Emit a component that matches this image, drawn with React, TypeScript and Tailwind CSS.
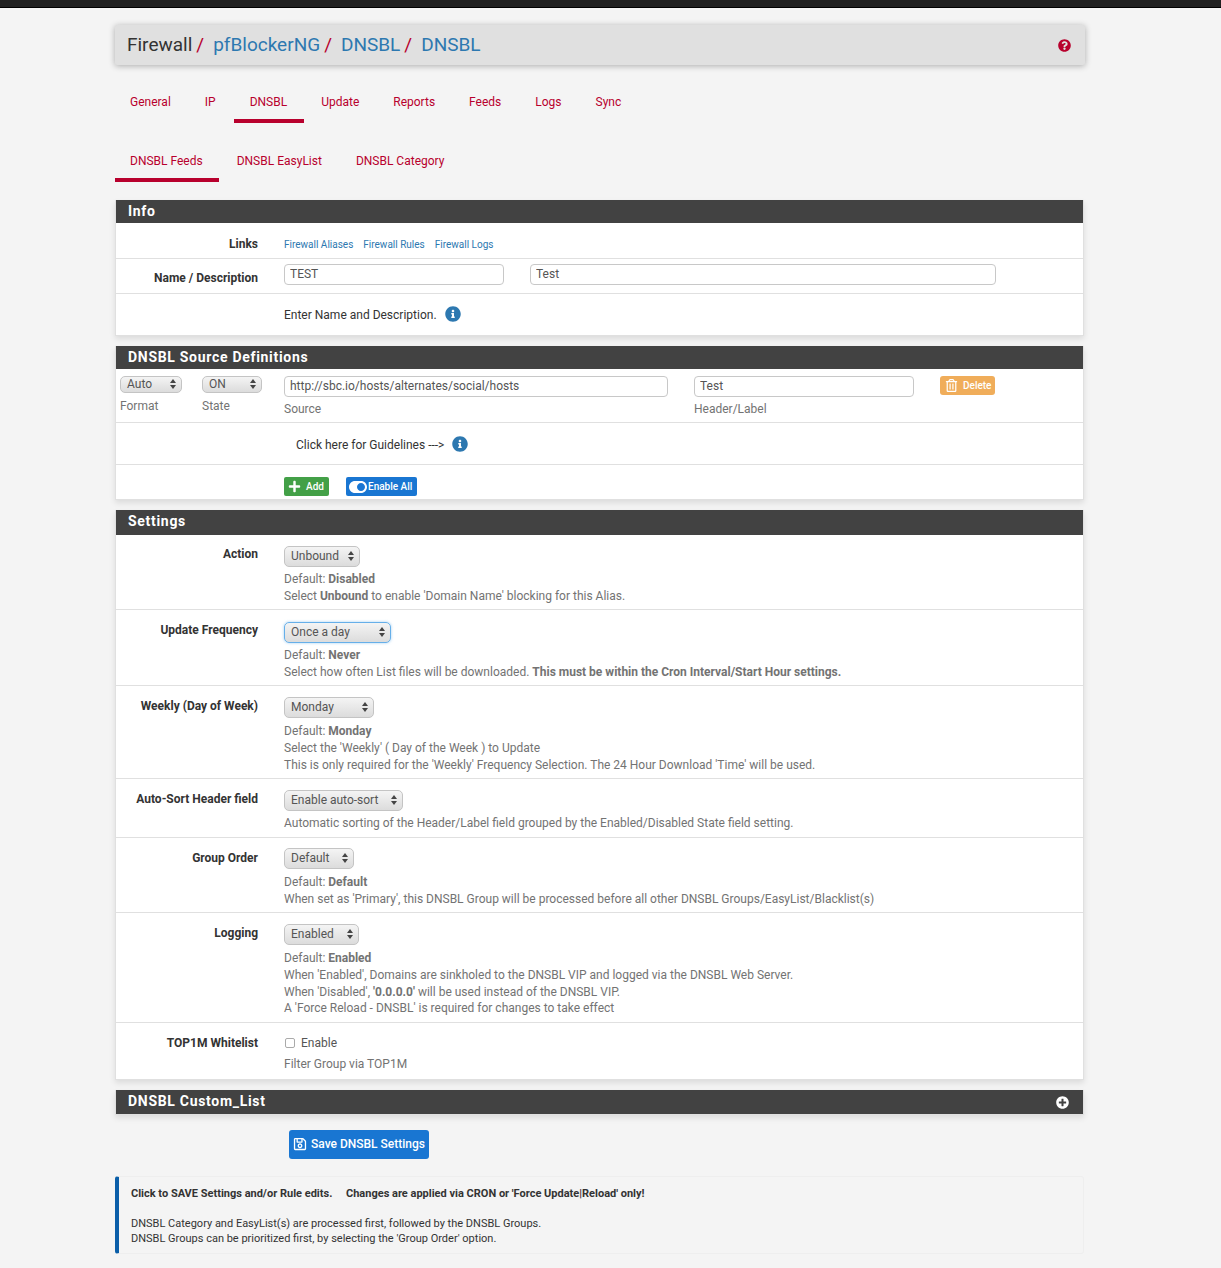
import type { ReactNode } from "react";
import {
  FaInfoCircle,
  FaPlus,
  FaPlusCircle,
  FaQuestionCircle,
  FaRegSave,
  FaRegTrashAlt,
  FaToggleOn,
} from "react-icons/fa";

const mainTabs = ["General", "IP", "DNSBL", "Update", "Reports", "Feeds", "Logs", "Sync"];
const subTabs = ["DNSBL Feeds", "DNSBL EasyList", "DNSBL Category"];
const crumbs = ["pfBlockerNG", "DNSBL", "DNSBL"];

function Tab({ label, className }: { label: string; className: string }) {
  return (
    <a className={`block h-[37px] border-b-4 pt-[7px] pl-[15px] text-[12px] leading-[18px] text-[#b8002d] ${className}`}>
      {label}
    </a>
  );
}

function Panel({
  title,
  head,
  children,
  icon,
}: {
  title: string;
  head: string;
  children?: ReactNode;
  icon?: ReactNode;
}) {
  return (
    <section className="border-x border-b border-[#e0e0e0] bg-white shadow-[0_3px_6px_rgba(0,0,0,0.1)]">
      <h2 className={`flex items-center justify-between bg-[#424242] pr-[14px] pl-[12px] text-[14px] leading-none font-bold tracking-[0.7px] text-white ${head}`}>
        {title}
        {icon}
      </h2>
      {children}
    </section>
  );
}

function Row({
  label,
  className,
  labelClass,
  children,
}: {
  label?: string;
  className: string;
  labelClass?: string;
  children: ReactNode;
}) {
  return (
    <div className={`flex border-b border-[#e0e0e0] last:border-b-0 ${className}`}>
      <div className={`w-[142px] shrink-0 text-right text-[12px] leading-[18px] font-bold text-[#333] ${labelClass ?? ""}`}>
        {label}
      </div>
      <div className="ml-[26px] min-w-0 flex-1">{children}</div>
    </div>
  );
}

function Select({ value, className, focus }: { value: string; className: string; focus?: boolean }) {
  return (
    <div
      className={`flex items-center justify-between rounded-[5px] border bg-gradient-to-b from-[#f4f4f4] to-[#dcdcdc] pr-[5px] pb-[1px] pl-[6px] text-[12px] text-[#555] ${className} ${
        focus ? "border-[#66afe9] shadow-[0_0_3px_rgba(102,175,233,0.6)]" : "border-[#c4c4c4]"
      }`}
    >
      <span>{value}</span>
      <svg width="6" height="10" viewBox="0 0 6 10" fill="#444">
        <path d="M3 0 6 4H0zM3 10 0 6h6z" />
      </svg>
    </div>
  );
}

function TextBox({ value, w }: { value: string; w: string }) {
  return (
    <input
      readOnly
      value={value}
      className={`h-[21px] rounded-[4px] border border-[#c8c8c8] bg-white px-[5px] pb-[1px] text-[12px] text-[#555] outline-none ${w}`}
    />
  );
}

function Help({ children }: { children: ReactNode }) {
  return <p className="text-[12px] leading-[16.8px] text-[#737373]">{children}</p>;
}

export default function App() {
  return (
    <div className="min-h-[1268px] bg-[#f4f4f4] font-['Roboto',sans-serif]">
      <div className="h-[8px] border-b border-black bg-[#212121]" />

      <div className="ml-[115px] w-[969px] pt-[17px]">
        <div className="flex h-[40px] w-[970px] items-center justify-between rounded-[2px] bg-[#e0e0e0] pr-[14px] pl-[12px] shadow-[0_1px_6px_rgba(0,0,0,0.3)]">
          <h1 className="flex pb-[1px] text-[19px] leading-none text-[#333]">
            Firewall
            {crumbs.map((c, i) => (
              <span key={i} className="flex">
                <span className="ml-[4px] text-[#b8002d]">/</span>
                <a className="ml-[9px] text-[#2d78b0]">{c}</a>
              </span>
            ))}
          </h1>
          <FaQuestionCircle className="text-[13px] text-[#b8002d]" />
        </div>

        <nav className="mt-[21px] flex">
          {mainTabs.map((t) => (
            <Tab
              key={t}
              label={t}
              className={
                t === "DNSBL"
                  ? "mr-[2px] -ml-px border-[#b8002d] pr-[17px] pl-[16px]"
                  : "mr-[4px] border-transparent pr-[15px]"
              }
            />
          ))}
        </nav>
        <nav className="mt-[22px] flex">
          {subTabs.map((t, i) => (
            <Tab
              key={t}
              label={t}
              className={i === 0 ? "mr-[3px] border-[#b8002d] pr-[16px]" : "mr-[4px] border-transparent pr-[15px]"}
            />
          ))}
        </nav>

        <div className="mt-[18px] flex flex-col gap-[10px]">
          <Panel title="Info" head="h-[23px] pb-[1px]">
            <Row label="Links" className="h-[36px] pt-[12px]">
              <div className="flex gap-[10px] pt-[2px] text-[10px] leading-[16px] text-[#2d78b0]">
                <a>Firewall Aliases</a>
                <a>Firewall Rules</a>
                <a>Firewall Logs</a>
              </div>
            </Row>
            <Row label="Name / Description" className="h-[35px] pt-[5px]" labelClass="mt-[5px]">
              <div className="flex gap-[26px]">
                <TextBox value="TEST" w="w-[220px]" />
                <TextBox value="Test" w="w-[466px]" />
              </div>
            </Row>
            <Row className="h-[41px]">
              <div className="flex items-start pt-[12px] text-[12px] leading-[18px] text-[#333]">
                Enter Name and Description.
                <FaInfoCircle className="ml-[8px] text-[16px] text-[#2d78b0]" />
              </div>
            </Row>
          </Panel>

          <Panel title="DNSBL Source Definitions" head="h-[23px] pb-[1px]">
            <div className="flex h-[54px] border-b border-[#e0e0e0] pt-[7px] text-[12px] text-[#737373]">
              <div className="ml-[4px] w-[82px]">
                <Select value="Auto" className="h-[17px] w-[62px]" />
                <p className="mt-[4px] leading-[18px]">Format</p>
              </div>
              <div className="w-[82px]">
                <Select value="ON" className="h-[17px] w-[60px]" />
                <p className="mt-[4px] leading-[18px]">State</p>
              </div>
              <div className="w-[410px]">
                <TextBox value="http://sbc.io/hosts/alternates/social/hosts" w="w-[384px]" />
                <p className="mt-[3px] leading-[18px]">Source</p>
              </div>
              <div className="w-[246px]">
                <TextBox value="Test" w="w-[220px]" />
                <p className="mt-[3px] leading-[18px]">Header/Label</p>
              </div>
              <a className="flex h-[19px] w-[55px] items-center gap-[5px] rounded-[3px] bg-[#f0ad5a] pl-[5px] text-[10px] font-medium text-white">
                <FaRegTrashAlt className="text-[13px]" />
                Delete
              </a>
            </div>
            <div className="flex h-[42px] items-center gap-[8px] border-b border-[#e0e0e0] pt-[3px] pl-[180px] text-[12px] text-[#333]">
              Click here for Guidelines ---&gt;
              <FaInfoCircle className="mb-[3px] text-[16px] text-[#2d78b0]" />
            </div>
            <div className="flex h-[34px] items-start gap-[17px] pt-[12px] pl-[168px]">
              <a className="flex h-[19px] w-[45px] items-center gap-[5px] rounded-[2px] bg-[#43a047] pl-[4px] text-[10px] font-medium text-white">
                <FaPlus className="text-[13px]" />
                Add
              </a>
              <a className="flex h-[19px] w-[71px] items-center gap-[1px] rounded-[2px] bg-[#1976d2] pl-[3px] text-[10px] font-medium text-white">
                <FaToggleOn className="text-[18px]" />
                Enable All
              </a>
            </div>
          </Panel>

          <Panel title="Settings" head="h-[25px] pb-[3px]">
            <Row label="Action" className="h-[75px] pt-[11px]" labelClass="-mt-px">
              <Select value="Unbound" className="h-[21px] w-[76px]" />
              <div className="mt-[4px]">
                <Help>
                  Default: <b>Disabled</b>
                </Help>
                <Help>
                  Select <b>Unbound</b> to enable 'Domain Name' blocking for this Alias.
                </Help>
              </div>
            </Row>
            <Row label="Update Frequency" className="h-[76px] pt-[12px]" labelClass="-mt-px">
              <Select value="Once a day" className="h-[21px] w-[107px]" focus />
              <div className="mt-[4px]">
                <Help>
                  Default: <b>Never</b>
                </Help>
                <Help>
                  Select how often List files will be downloaded.{" "}
                  <b>This must be within the Cron Interval/Start Hour settings.</b>
                </Help>
              </div>
            </Row>
            <Row label="Weekly (Day of Week)" className="h-[93px] pt-[11px]">
              <Select value="Monday" className="h-[21px] w-[90px]" />
              <div className="mt-[5px]">
                <Help>
                  Default: <b>Monday</b>
                </Help>
                <Help>Select the 'Weekly' ( Day of the Week ) to Update</Help>
                <Help>This is only required for the 'Weekly' Frequency Selection. The 24 Hour Download 'Time' will be used.</Help>
              </div>
            </Row>
            <Row label="Auto-Sort Header field" className="h-[59px] pt-[11px]">
              <Select value="Enable auto-sort" className="h-[21px] w-[119px]" />
              <div className="mt-[4px]">
                <Help>Automatic sorting of the Header/Label field grouped by the Enabled/Disabled State field setting.</Help>
              </div>
            </Row>
            <Row label="Group Order" className="h-[75px] pt-[10px]" labelClass="mt-px">
              <Select value="Default" className="h-[21px] w-[70px]" />
              <div className="mt-[5px]">
                <Help>
                  Default: <b>Default</b>
                </Help>
                <Help>When set as 'Primary', this DNSBL Group will be processed before all other DNSBL Groups/EasyList/Blacklist(s)</Help>
              </div>
            </Row>
            <Row label="Logging" className="h-[110px] pt-[11px]">
              <Select value="Enabled" className="h-[21px] w-[75px]" />
              <div className="mt-[5px]">
                <Help>
                  Default: <b>Enabled</b>
                </Help>
                <Help>When 'Enabled', Domains are sinkholed to the DNSBL VIP and logged via the DNSBL Web Server.</Help>
                <Help>
                  When 'Disabled', <b>'0.0.0.0'</b> will be used instead of the DNSBL VIP.
                </Help>
                <Help>A 'Force Reload - DNSBL' is required for changes to take effect</Help>
              </div>
            </Row>
            <Row label="TOP1M Whitelist" className="h-[56px] pt-[11px]">
              <label className="flex h-[18px] items-center gap-[6px] pl-[1px] text-[12px] text-[#555]">
                <span className="h-[10px] w-[10px] rounded-[2px] border border-[#aaa] bg-white" />
                Enable
              </label>
              <div className="mt-[4px]">
                <Help>Filter Group via TOP1M</Help>
              </div>
            </Row>
          </Panel>

          <Panel
            title="DNSBL Custom_List"
            head="h-[24px] pb-[2px]"
            icon={<FaPlusCircle className="mt-[2px] text-[13px]" />}
          />
        </div>

        <div className="mt-[15px] pl-[174px]">
          <a className="flex h-[29px] w-[140px] items-center gap-[4px] rounded-[3px] bg-[#1976d2] pb-[1px] pl-[4px] text-[12px] font-medium text-white">
            <FaRegSave className="text-[14px]" />
            Save DNSBL Settings
          </a>
        </div>

        <div className="mt-[17px] h-[78px] rounded-[3px] border border-l-4 border-[#eee] border-l-[#0a5ea8] pt-[9px] pl-[12px] text-[11px] leading-[15px] text-[#333]">
          <p className="font-bold">
            Click to SAVE Settings and/or Rule edits. &nbsp;&nbsp;&nbsp; Changes are applied via CRON or 'Force Update|Reload' only!
          </p>
          <p className="mt-[15px]">DNSBL Category and EasyList(s) are processed first, followed by the DNSBL Groups.</p>
          <p>DNSBL Groups can be prioritized first, by selecting the 'Group Order' option.</p>
        </div>
      </div>
    </div>
  );
}
